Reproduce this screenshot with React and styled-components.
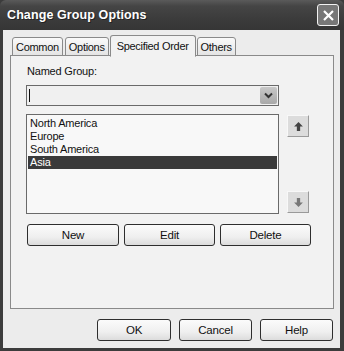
import React from "react";
import styled, { createGlobalStyle } from "styled-components";

const Global = createGlobalStyle`
  html, body { margin: 0; padding: 0; background: #2e2e2e; }
  body { font-family: "Liberation Sans", Arial, sans-serif; font-size: 11px; color: #111; }
`;

const Window = styled.div`
  width: 344px;
  height: 351px;
  box-sizing: border-box;
  display: flex;
  flex-direction: column;
  background: #3c3c3c;
  padding: 0 4px 3px 3px;
  overflow: hidden;
`;

const TitleBar = styled.div`
  height: 30px;
  margin: 0 -4px 0 -3px;
  padding: 0 5px 0 7px;
  display: flex;
  align-items: center;
  justify-content: space-between;
  background: linear-gradient(#5a5a5a 0%, #454545 20%, #3c3c3c 60%, #363636 100%);
  border-radius: 6px 6px 0 0;
`;

const Title = styled.div`
  color: #fff;
  font-weight: bold;
  font-size: 12.5px;
  letter-spacing: 0.1px;
  text-shadow: 1px 1px 0 #222;
`;

const CloseBtn = styled.div`
  width: 20px;
  height: 20px;
  border: 1.5px solid #f2f2f2;
  border-radius: 3px;
  background: #777;
  display: flex;
  align-items: center;
  justify-content: center;
`;

const Body = styled.div`
  flex: 1;
  background: #ececec;
  display: flex;
  flex-direction: column;
  padding: 4px 7px 0 7px;
`;

const TabRow = styled.div`
  display: flex;
  align-items: flex-end;
  padding-left: 2px;
  height: 22px;
  position: relative;
  z-index: 1;
`;

const Tab = styled.div`
  height: ${(p) => (p.$active ? "22px" : "19px")};
  box-sizing: border-box;
  padding: 0 ${(p) => (p.$active ? "6px" : "3px")};
  margin-left: ${(p) => (p.$active ? "-1px" : "0")};
  margin-right: ${(p) => (p.$active ? "1px" : "2px")};
  border: 1px solid #8a8a8a;
  border-bottom: ${(p) => (p.$active ? "1px solid #f2f2f2" : "1px solid #8a8a8a")};
  border-radius: 3px 3px 0 0;
  background: ${(p) => (p.$active ? "#f2f2f2" : "linear-gradient(#fafafa, #e4e4e4)")};
  display: flex;
  align-items: center;
  font-size: 11px;
  letter-spacing: -0.3px;
  margin-bottom: ${(p) => (p.$active ? "-1px" : "0")};
`;

const Panel = styled.div`
  height: 254px;
  box-sizing: border-box;
  border: 1px solid #8a8a8a;
  background: #f2f2f2;
  margin-top: -1px;
  width: 324px;
  padding: 9px 0 0 15px;
  display: flex;
  flex-direction: column;
`;

const Label = styled.div`
  font-size: 11px;
  letter-spacing: -0.2px;
  margin: 0 0 8px 1px;
`;

const Combo = styled.div`
  width: 253px;
  height: 21px;
  box-sizing: border-box;
  border: 1px solid #6a6a6a;
  background: #f0f0f0;
  display: flex;
  align-items: center;
  justify-content: space-between;
  padding: 0 1px 0 2px;
`;

const Caret = styled.div`
  width: 1px;
  height: 13px;
  background: #111;
`;

const DropBtn = styled.div`
  width: 17px;
  height: 17px;
  background: linear-gradient(#c8c8c8, #a8a8a8);
  border-radius: 2px;
  display: flex;
  align-items: center;
  justify-content: center;
`;

const ListArea = styled.div`
  display: flex;
  gap: 7px;
  margin-top: 8px;
`;

const List = styled.div`
  width: 253px;
  height: 100px;
  box-sizing: border-box;
  border: 1px solid #6a6a6a;
  background: #f8f8f8;
  padding: 2px 1px;
`;

const Item = styled.div`
  height: 13px;
  line-height: 13px;
  padding-left: 2px;
  font-size: 11px;
  letter-spacing: -0.2px;
  background: ${(p) => (p.$selected ? "#3a3a3a" : "transparent")};
  color: ${(p) => (p.$selected ? "#fff" : "#111")};
`;

const Arrows = styled.div`
  display: flex;
  flex-direction: column;
  justify-content: space-between;
  padding: 1px 0 1px 1px;
`;

const ArrowBtn = styled.div`
  width: 22px;
  height: 22px;
  box-sizing: border-box;
  background: #dcdcdc;
  border-right: 1px solid #9a9a9a;
  border-bottom: 1px solid #9a9a9a;
  border-top: 1px solid #f8f8f8;
  border-left: 1px solid #f8f8f8;
  display: flex;
  align-items: center;
  justify-content: center;
`;

const ButtonRow = styled.div`
  display: flex;
  gap: 5px;
  margin-top: 10px;
  padding-left: 1px;
`;

const Button = styled.div`
  width: ${(p) => p.$w}px;
  height: 22px;
  box-sizing: border-box;
  border: 1px solid #2e2e2e;
  border-radius: 3px;
  background: linear-gradient(#fbfbfb 0%, #efefef 60%, #dcdcdc 100%);
  display: flex;
  align-items: center;
  justify-content: center;
  font-size: 11.5px;
  letter-spacing: -0.2px;
`;

const Footer = styled.div`
  display: flex;
  justify-content: flex-end;
  gap: 8px;
  padding: 10px 0 0 0;
`;

const Up = () => (
  <svg width="11" height="11" viewBox="0 0 10 10">
    <path d="M5 1 L9 5 L6.5 5 L6.5 9 L3.5 9 L3.5 5 L1 5 Z" fill="#444" />
  </svg>
);

const Down = () => (
  <svg width="11" height="11" viewBox="0 0 10 10">
    <path d="M5 9 L9 5 L6.5 5 L6.5 1 L3.5 1 L3.5 5 L1 5 Z" fill="#777" />
  </svg>
);

export default function App() {
  return (
    <>
      <Global />
      <Window>
        <TitleBar>
          <Title>Change Group Options</Title>
          <CloseBtn>
            <svg width="13" height="13" viewBox="0 0 13 13">
              <path d="M2 2 L11 11 M11 2 L2 11" stroke="#fff" strokeWidth="2.2" />
            </svg>
          </CloseBtn>
        </TitleBar>
        <Body>
          <TabRow>
            <Tab>Common</Tab>
            <Tab>Options</Tab>
            <Tab $active>Specified Order</Tab>
            <Tab>Others</Tab>
          </TabRow>
          <Panel>
            <Label>Named Group:</Label>
            <Combo>
              <Caret />
              <DropBtn>
                <svg width="9" height="7" viewBox="0 0 9 7">
                  <path d="M1 1.5 L4.5 5 L8 1.5" stroke="#333" strokeWidth="2" fill="none" />
                </svg>
              </DropBtn>
            </Combo>
            <ListArea>
              <List>
                <Item>North America</Item>
                <Item>Europe</Item>
                <Item>South America</Item>
                <Item $selected>Asia</Item>
              </List>
              <Arrows>
                <ArrowBtn><Up /></ArrowBtn>
                <ArrowBtn><Down /></ArrowBtn>
              </Arrows>
            </ListArea>
            <ButtonRow>
              <Button $w={92}>New</Button>
              <Button $w={91}>Edit</Button>
              <Button $w={91}>Delete</Button>
            </ButtonRow>
          </Panel>
          <Footer>
            <Button $w={74}>OK</Button>
            <Button $w={73}>Cancel</Button>
            <Button $w={73}>Help</Button>
          </Footer>
        </Body>
      </Window>
    </>
  );
}
